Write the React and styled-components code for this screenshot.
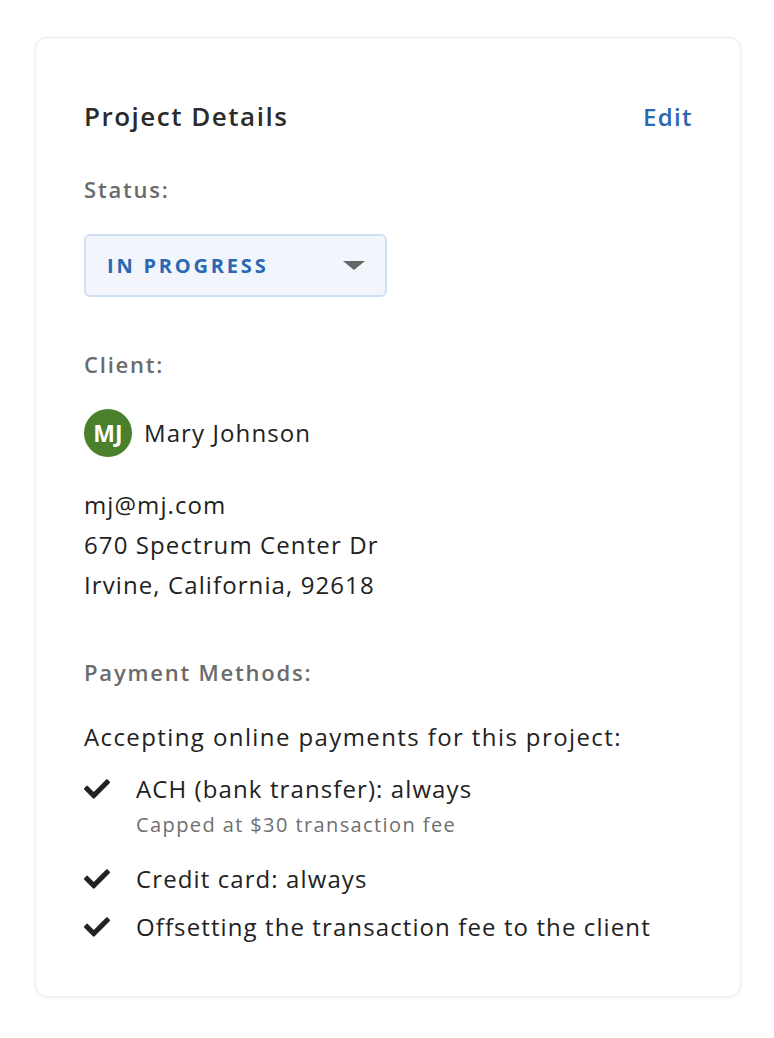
import React from 'react'
import styled, { createGlobalStyle } from 'styled-components'
import { FaCheck } from 'react-icons/fa'

const GlobalStyle = createGlobalStyle`
    body {
        margin: 0;
        background: #fff;
        font-family: 'Open Sans', 'Lato', sans-serif;
        color: #222;
    }
`

const Page = styled.div`
    padding: 37px 33px 40px 35px;
`

const Card = styled.div`
    border: 1px solid #ececec;
    border-radius: 12px;
    box-shadow: 0 1px 4px rgba(0, 0, 0, 0.06);
    padding: 58px 48px 49px 48px;
    background: #fff;
`

const Header = styled.div`
    display: flex;
    justify-content: space-between;
    align-items: center;
    height: 40px;
    margin-bottom: 38px;
`

const Title = styled.h2`
    margin: 0;
    font-size: 26px;
    font-weight: 600;
    letter-spacing: 1.5px;
    color: #2b2b2b;
`

const EditLink = styled.a`
    font-size: 24px;
    font-weight: 600;
    letter-spacing: 1.4px;
    margin-right: -1px;
    color: #2a68b3;
    text-decoration: none;
    cursor: pointer;
`

const Label = styled.div`
    font-size: 22px;
    font-weight: 600;
    letter-spacing: 1.8px;
    color: #6b6b6b;
    line-height: 30px;
    margin-bottom: 30px;
`

const Select = styled.div`
    display: flex;
    align-items: center;
    justify-content: space-between;
    width: 303px;
    height: 63px;
    box-sizing: border-box;
    padding: 0 20px 0 21px;
    background: #f2f6fc;
    border: 2px solid #cfe0f5;
    border-radius: 6px;
    margin-bottom: 52px;
`

const SelectText = styled.span`
    font-size: 20px;
    font-weight: 700;
    letter-spacing: 2.8px;
    color: #2a68b3;
`

const Caret = styled.span`
    width: 0;
    height: 0;
    border-left: 11px solid transparent;
    border-right: 11px solid transparent;
    border-top: 9px solid #666;
`

const ClientRow = styled.div`
    display: flex;
    align-items: center;
    gap: 12px;
    margin-bottom: 28px;
`

const Avatar = styled.div`
    width: 48px;
    height: 48px;
    border-radius: 50%;
    background: #4a7f2b;
    color: #fff;
    font-size: 23px;
    font-weight: 700;
    display: flex;
    align-items: center;
    justify-content: center;
`

const Text = styled.div`
    font-size: 24px;
    line-height: 40px;
    letter-spacing: 1.1px;
    color: #222;
`

const Address = styled.div`
    margin-bottom: 52px;
`

const Intro = styled(Text)`
    margin-bottom: 12px;
    letter-spacing: 1.4px;
`

const CheckList = styled.ul`
    list-style: none;
    margin: 0;
    padding: 0;
    display: flex;
    flex-direction: column;
    gap: 8px;
`

const CheckItem = styled.li`
    display: flex;
    align-items: flex-start;
    gap: 26px;
`

const CheckBox = styled.span`
    flex: none;
    width: 26px;
    height: 40px;
    display: flex;
    align-items: center;
    color: #222;
`

const ItemBody = styled.div`
    display: flex;
    flex-direction: column;
`

const SubText = styled.div`
    font-size: 20px;
    line-height: 26px;
    letter-spacing: 1.4px;
    color: #6f6f6f;
    margin-top: 3px;
    margin-bottom: 13px;
`

const methods = [
    { key: 0, text: 'ACH (bank transfer): always', sub: 'Capped at $30 transaction fee' },
    { key: 1, text: 'Credit card: always' },
    { key: 2, text: 'Offsetting the transaction fee to the client' },
]

const App = () => {
    return (
        <>
            <GlobalStyle />
            <Page>
                <Card>
                    <Header>
                        <Title>Project Details</Title>
                        <EditLink>Edit</EditLink>
                    </Header>

                    <Label>Status:</Label>
                    <Select>
                        <SelectText>IN PROGRESS</SelectText>
                        <Caret />
                    </Select>

                    <Label>Client:</Label>
                    <ClientRow>
                        <Avatar>MJ</Avatar>
                        <Text>Mary Johnson</Text>
                    </ClientRow>
                    <Address>
                        <Text>mj@mj.com</Text>
                        <Text>670 Spectrum Center Dr</Text>
                        <Text>Irvine, California, 92618</Text>
                    </Address>

                    <Label>Payment Methods:</Label>
                    <Intro>Accepting online payments for this project:</Intro>
                    <CheckList>
                        {methods.map(m => (
                            <CheckItem key={m.key}>
                                <CheckBox><FaCheck size={26} /></CheckBox>
                                <ItemBody>
                                    <Text>{m.text}</Text>
                                    {m.sub && <SubText>{m.sub}</SubText>}
                                </ItemBody>
                            </CheckItem>
                        ))}
                    </CheckList>
                </Card>
            </Page>
        </>
    )
}

export default App
